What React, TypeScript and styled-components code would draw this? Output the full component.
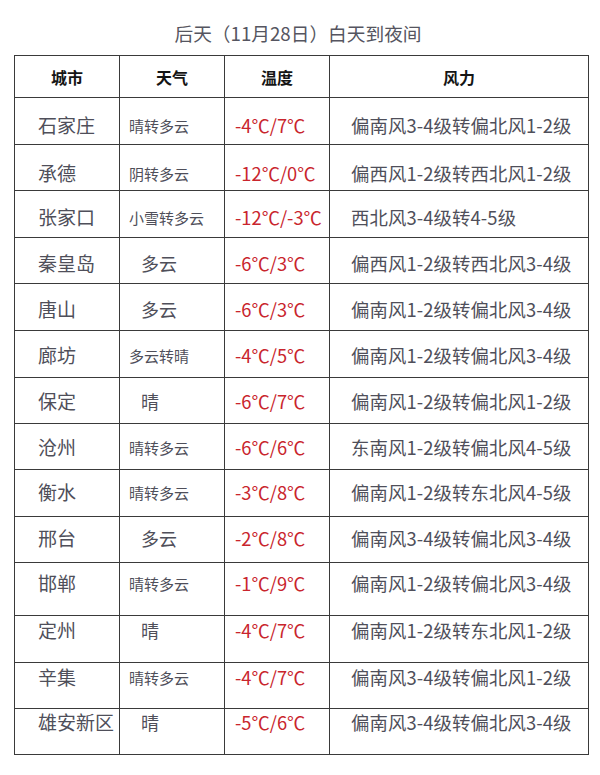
import React from "react";
import styled, { createGlobalStyle } from "styled-components";

const GlobalStyle = createGlobalStyle`
  html, body {
    margin: 0;
    padding: 0;
    background: #ffffff;
  }
  body {
    font-family: "Noto Sans CJK SC", "Noto Sans", sans-serif;
  }
`;

const Page = styled.div`
  width: 600px;
  height: 775px;
  display: flex;
  flex-direction: column;
  align-items: flex-start;
  background: #fff;
`;

const Title = styled.div`
  align-self: stretch;
  padding-top: 21px;
  height: 24px;
  line-height: 24px;
  font-size: 18.7px;
  color: #555560;
  text-align: center;
  padding-right: 4px;
  margin-bottom: 10px;
`;

const Table = styled.table`
  margin-left: 14px;
  width: 574px;
  border-collapse: collapse;
  table-layout: fixed;
  border: 1px solid #3a3a3a;
`;

const HeadCell = styled.th`
  height: 41px;
  padding: 0;
  border: 1px solid #3a3a3a;
  font-size: 16px;
  font-weight: 700;
  color: #151515;
  text-align: center;
  vertical-align: middle;
  line-height: 24px;
`;

const Row = styled.tr<{ $h: number }>`
  height: ${(p) => p.$h}px;
`;

const Cell = styled.td<{ $top: number; $indent: number }>`
  padding: ${(p) => p.$top}px 0 0 ${(p) => p.$indent}px;
  border: 1px solid #3a3a3a;
  vertical-align: top;
  line-height: 24px;
  white-space: nowrap;
  overflow: visible;
`;

const CityCell = styled(Cell)`
  font-size: 19px;
  color: #4f4f5a;
`;

const WeatherCell = styled(Cell)<{ $big: boolean }>`
  font-size: ${(p) => (p.$big ? 18 : 15)}px;
  color: #4f4f5a;
`;

const TempCell = styled(Cell)`
  font-size: 18.3px;
  color: #c9252d;
`;

const WindCell = styled(Cell)`
  font-size: 18.4px;
  letter-spacing: 0.1px;
  color: #4f4f5a;
`;

type Item = {
  city: string;
  weather: string;
  temp: string;
  wind: string;
  h: number;
  top: number;
};

const rows: Item[] = [
  { city: "石家庄", weather: "晴转多云", temp: "-4℃/7℃", wind: "偏南风3-4级转偏北风1-2级", h: 47, top: 15 },
  { city: "承德", weather: "阴转多云", temp: "-12℃/0℃", wind: "偏西风1-2级转西北风1-2级", h: 46, top: 16 },
  { city: "张家口", weather: "小雪转多云", temp: "-12℃/-3℃", wind: "西北风3-4级转4-5级", h: 47, top: 14 },
  { city: "秦皇岛", weather: "多云", temp: "-6℃/3℃", wind: "偏西风1-2级转西北风3-4级", h: 46, top: 13 },
  { city: "唐山", weather: "多云", temp: "-6℃/3℃", wind: "偏南风1-2级转偏北风3-4级", h: 47, top: 13 },
  { city: "廊坊", weather: "多云转晴", temp: "-4℃/5℃", wind: "偏南风1-2级转偏北风3-4级", h: 47, top: 12 },
  { city: "保定", weather: "晴", temp: "-6℃/7℃", wind: "偏南风1-2级转偏北风1-2级", h: 46, top: 11 },
  { city: "沧州", weather: "晴转多云", temp: "-6℃/6℃", wind: "东南风1-2级转偏北风4-5级", h: 46, top: 11 },
  { city: "衡水", weather: "晴转多云", temp: "-3℃/8℃", wind: "偏南风1-2级转东北风4-5级", h: 47, top: 10 },
  { city: "邢台", weather: "多云", temp: "-2℃/8℃", wind: "偏南风3-4级转偏北风3-4级", h: 46, top: 9 },
  { city: "邯郸", weather: "晴转多云", temp: "-1℃/9℃", wind: "偏南风1-2级转偏北风3-4级", h: 53, top: 8 },
  { city: "定州", weather: "晴", temp: "-4℃/7℃", wind: "偏南风1-2级转东北风1-2级", h: 47, top: 2 },
  { city: "辛集", weather: "晴转多云", temp: "-4℃/7℃", wind: "偏南风3-4级转偏北风1-2级", h: 46, top: 2 },
  { city: "雄安新区", weather: "晴", temp: "-5℃/6℃", wind: "偏南风3-4级转偏北风3-4级", h: 46, top: 1 },
];

export default function App() {
  return (
    <>
      <GlobalStyle />
      <Page>
        <Title>后天（11月28日）白天到夜间</Title>
        <Table>
          <colgroup>
            <col style={{ width: 105 }} />
            <col style={{ width: 105 }} />
            <col style={{ width: 105 }} />
            <col style={{ width: 259 }} />
          </colgroup>
          <thead>
            <tr>
              <HeadCell>城市</HeadCell>
              <HeadCell>天气</HeadCell>
              <HeadCell>温度</HeadCell>
              <HeadCell>风力</HeadCell>
            </tr>
          </thead>
          <tbody>
            {rows.map((r) => {
              const big = r.weather.length <= 2;
              return (
                <Row key={r.city} $h={r.h}>
                  <CityCell $top={r.top} $indent={23}>{r.city}</CityCell>
                  <WeatherCell
                    $big={big}
                    $top={big ? r.top : r.top + 1}
                    $indent={big ? 21 : 9}
                  >
                    {r.weather}
                  </WeatherCell>
                  <TempCell $top={r.top} $indent={10}>{r.temp}</TempCell>
                  <WindCell $top={r.top} $indent={21}>{r.wind}</WindCell>
                </Row>
              );
            })}
          </tbody>
        </Table>
      </Page>
    </>
  );
}
